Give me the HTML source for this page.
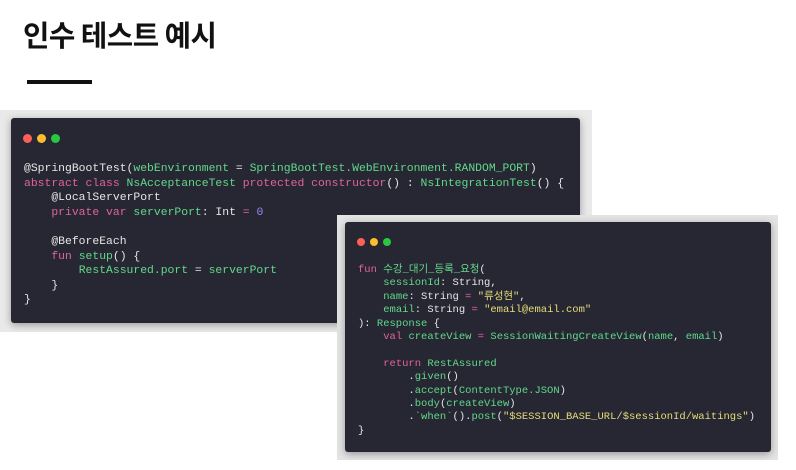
<!DOCTYPE html>
<html><head><meta charset="utf-8"><style>
body{margin:0;width:796px;height:470px;background:#fff;position:relative;overflow:hidden;font-family:"Liberation Sans","Noto Sans CJK KR",sans-serif}
.title{position:absolute;left:23px;top:14px;font-size:29px;font-weight:bold;color:#111;transform:scaleX(0.99);transform-origin:left top;font-family:"Noto Sans CJK KR",sans-serif;line-height:40px;letter-spacing:-0.5px}
.bar{position:absolute;left:27px;top:80px;width:65px;height:4px;background:#111}
.bd{position:absolute;background:#e6e6e6}
.win{position:absolute;background:#262733;border-radius:3px;box-shadow:0 2px 8px rgba(0,0,0,.35)}
.dots{position:absolute;left:12px;top:12px}
.dots span{display:inline-block;width:9px;height:9px;border-radius:50%;margin-right:5px}
pre{position:absolute;margin:0;font-family:"Liberation Mono","Noto Sans CJK KR",monospace;color:#e6e6e6}
.k{color:#e2639a}.g{color:#62d98a}.s{color:#e8dc78}.n{color:#9a86f0}
</style></head><body>
<div class="title">인수 테스트 예시</div>
<div class="bar"></div>
<div class="bd" style="left:0;top:110px;width:592px;height:222px;background:#e9e9e9"></div>
<div class="win" style="left:11px;top:118px;width:569px;height:205px">
<div class="dots" style="left:12px;top:12px"><span style="background:#fe5f57"></span><span style="background:#febc2e"></span><span style="background:#28c840"></span></div>
<pre style="left:13px;top:44px;font-size:11.4px;line-height:14.6px">@SpringBootTest(<span class="g">webEnvironment</span> = <span class="g">SpringBootTest.WebEnvironment.RANDOM_PORT</span>)
<span class="k">abstract class</span> <span class="g">NsAcceptanceTest</span> <span class="k">protected constructor</span>() : <span class="g">NsIntegrationTest</span>() {
    @LocalServerPort
    <span class="k">private var</span> <span class="g">serverPort</span>: Int <span class="k">=</span> <span class="n">0</span>

    @BeforeEach
    <span class="k">fun</span> <span class="g">setup</span>() {
        <span class="g">RestAssured.port</span> = <span class="g">serverPort</span>
    }
}</pre>
</div>
<div class="bd" style="left:337px;top:215px;width:441px;height:245px;background:#e4e4e4"></div>
<div class="win" style="left:345px;top:222px;width:426px;height:230px">
<div class="dots" style="left:12px;top:11px"><span style="background:#fe5f57;width:8px;height:8px"></span><span style="background:#febc2e;width:8px;height:8px"></span><span style="background:#28c840;width:8px;height:8px"></span></div>
<pre style="left:13px;top:42px;font-size:10.5px;line-height:13.4px"><span class="k">fun</span> <span class="g">수강_대기_등록_요청</span>(
    <span class="g">sessionId</span>: String,
    <span class="g">name</span>: String <span class="k">=</span> <span class="s">"류성현"</span>,
    <span class="g">email</span>: String <span class="k">=</span> <span class="s">"email@email.com"</span>
): <span class="g">Response</span> {
    <span class="k">val</span> <span class="g">createView</span> <span class="k">=</span> <span class="g">SessionWaitingCreateView</span>(<span class="g">name</span>, <span class="g">email</span>)

    <span class="k">return</span> <span class="g">RestAssured</span>
        .<span class="g">given</span>()
        .<span class="g">accept</span>(<span class="g">ContentType.JSON</span>)
        .<span class="g">body</span>(<span class="g">createView</span>)
        .<span class="g">`when`</span>().<span class="g">post</span>(<span class="s">"$SESSION_BASE_URL/$sessionId/waitings"</span>)
}</pre>
</div>
</body></html>
